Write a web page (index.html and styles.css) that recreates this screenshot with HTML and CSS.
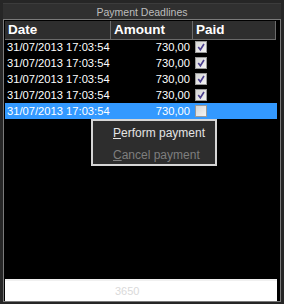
FILE: index.html
```html
<!DOCTYPE html>
<html lang="en">
<head>
    <meta charset="UTF-8">
    <meta name="viewport" content="width=device-width, initial-scale=1.0">
    <title>Payment Deadlines</title>
    <link rel="stylesheet" href="styles.css">
</head>
<body>
    <div class="window">
        <div class="title">Payment Deadlines</div>
        <div class="grid">
            <div class="head">
                <div class="hcell">Date</div>
                <div class="hcell">Amount</div>
                <div class="hcell">Paid</div>
            </div>

            <div class="row">
                <div class="date">31/07/2013 17:03:54</div>
                <div class="amount">730,00</div>
                <div class="paid"><span class="check on"><svg viewBox="0 0 11 11"><path d="M2.5 5.5 L4.8 8.5 L8.8 2.2"/></svg></span></div>
            </div>
            <div class="row">
                <div class="date">31/07/2013 17:03:54</div>
                <div class="amount">730,00</div>
                <div class="paid"><span class="check on"><svg viewBox="0 0 11 11"><path d="M2.5 5.5 L4.8 8.5 L8.8 2.2"/></svg></span></div>
            </div>
            <div class="row">
                <div class="date">31/07/2013 17:03:54</div>
                <div class="amount">730,00</div>
                <div class="paid"><span class="check on"><svg viewBox="0 0 11 11"><path d="M2.5 5.5 L4.8 8.5 L8.8 2.2"/></svg></span></div>
            </div>
            <div class="row">
                <div class="date">31/07/2013 17:03:54</div>
                <div class="amount">730,00</div>
                <div class="paid"><span class="check on"><svg viewBox="0 0 11 11"><path d="M2.5 5.5 L4.8 8.5 L8.8 2.2"/></svg></span></div>
            </div>
            <div class="row selected">
                <div class="date">31/07/2013 17:03:54</div>
                <div class="amount">730,00</div>
                <div class="paid"><span class="check"></span></div>
            </div>

            <div class="spacer"></div>
            <div class="footer">3650</div>
        </div>

        <div class="menu">
            <div class="item"><u>P</u>erform payment</div>
            <div class="item disabled"><u>C</u>ancel payment</div>
        </div>
    </div>
</body>
</html>
```

FILE: styles.css
```css
body {
    margin: 0;
    background: #262626;
    font-family: 'Liberation Sans', Arial, sans-serif;
    overflow: hidden;
}
.window {
    position: relative;
    box-sizing: border-box;
    width: 284px;
    height: 304px;
    padding: 3px 3px 2px 3px;
    display: flex;
    flex-direction: column;
}
.title {
    height: 16px;
    line-height: 17px;
    text-align: center;
    font-size: 10.5px;
    color: #bdbdbd;
    background: #303030;
    border-top: 1px solid #3c3c3c;
    box-sizing: border-box;
}
.grid {
    flex: 1;
    display: flex;
    flex-direction: column;
    background: #000;
    border: 1px solid #7a7a7a;
    padding: 1px 3px 0 1px;
}
.head {
    display: grid;
    grid-template-columns: 106px 82px 83px;
    height: 18px;
}
.hcell {
    background: #2e2e2e;
    border-right: 1px solid #6a6a6a;
    border-bottom: 1px solid #6a6a6a;
    color: #fff;
    font-weight: bold;
    font-size: 13.5px;
    line-height: 18px;
    padding-left: 3px;
}
.row {
    display: grid;
    grid-template-columns: 106px 82px 83px;
    height: 16px;
    line-height: 16px;
    font-size: 11.2px;
    color: #fff;
}
.row.selected {
    background: #3399ff;
}
.date {
    padding-left: 2px;
}
.amount {
    text-align: right;
    padding-right: 3px;
}
.paid {
    padding-left: 2px;
    display: flex;
    align-items: center;
}
.check {
    width: 10px;
    height: 10px;
    border: 1px solid #9a9a9a;
    background: linear-gradient(135deg, #d6d6d6, #f4f4f4);
    display: block;
}
.check svg {
    width: 10px;
    height: 10px;
    display: block;
}
.check path {
    fill: none;
    stroke: #4b3f8e;
    stroke-width: 1.8;
}
.spacer {
    flex: 1;
}
.footer {
    height: 22px;
    background: #fff;
    border-top: 2px solid #f0f0f0;
    box-sizing: border-box;
    font-size: 11px;
    line-height: 20px;
    color: #dadada;
    padding-left: 110px;
}
.menu {
    position: absolute;
    left: 91px;
    top: 119px;
    width: 126px;
    height: 47px;
    box-sizing: border-box;
    background: #2d2d2d;
    border: 2px solid #d6d6d6;
    padding-top: 1px;
}
.item {
    height: 22px;
    line-height: 22px;
    font-size: 12px;
    color: #e4e4e4;
    padding-left: 20px;
}
.item.disabled {
    color: #7e7e7e;
}
```
